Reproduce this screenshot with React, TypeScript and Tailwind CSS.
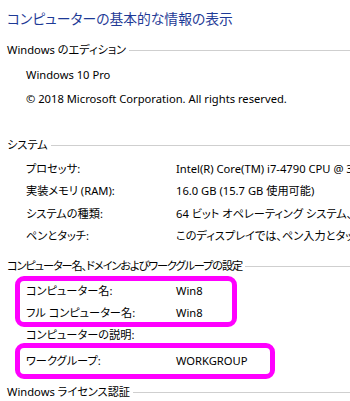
import React from "react";

const font = {
  fontFamily: '"Segoe UI", "Noto Sans", "Noto Sans CJK JP", sans-serif',
};

function Header({ children, h, tight }: { children: React.ReactNode; h: string; tight?: boolean }) {
  return (
    <div className={`flex items-center pl-[7px] ${h}`}>
      <span
        className={`whitespace-nowrap text-[11.2px] leading-none text-black ${tight ? "tracking-[-1.1px]" : ""}`}
      >
        {children}
      </span>
      <div className="ml-[3px] h-px flex-1 bg-[#cfcfcf]" />
    </div>
  );
}

function Row({ label, value, h, pl = "pl-[26px]" }: { label: string; value?: string; h: string; pl?: string }) {
  return (
    <div className={`flex items-center whitespace-nowrap text-[11.2px] leading-none text-black ${h} ${pl}`}>
      <span className="w-[150px] shrink-0">{label}</span>
      {value && <span>{value}</span>}
    </div>
  );
}

export default function App() {
  return (
    <div
      className="relative h-[401px] w-[350px] overflow-hidden bg-white [font-feature-settings:'palt']"
      style={font}
    >
      <div className="flex h-[38px] items-center pl-[7px]">
        <span className="whitespace-nowrap text-[13.8px] leading-none text-[#1e3a96]">
          コンピューターの基本的な情報の表示
        </span>
      </div>

      <Header h="h-[24px]">Windows のエディション</Header>
      <div className="h-[1px]" />
      <Row h="h-[24px]" label="Windows 10 Pro" />
      <div className="flex h-[24px] items-center whitespace-nowrap pl-[26px] text-[11.2px] leading-none text-black">
        © 2018 Microsoft Corporation. All rights reserved.
      </div>

      <div className="h-[22px]" />
      <Header h="h-[24px]">システム</Header>
      <div className="h-[1px]" />
      <Row h="h-[22px]" label="プロセッサ:" value="Intel(R) Core(TM) i7-4790 CPU @ 3.60GHz   3.60 GHz" />
      <Row h="h-[22px]" label="実装メモリ (RAM):" value="16.0 GB (15.7 GB 使用可能)" />
      <Row h="h-[23px]" label="システムの種類:" value="64 ビット オペレーティング システム、x64 ベース プロセッサ" />
      <Row h="h-[22px]" label="ペンとタッチ:" value="このディスプレイでは、ペン入力とタッチ入力は利用できません" />

      <div className="h-[9px]" />
      <Header h="h-[20px]" tight>
        コンピューター名、ドメインおよびワークグループの設定
      </Header>

      <div className="ml-[15px] h-[51px] w-[222px] rounded-[9px] border-[5px] border-[#ff00ff]">
        <Row h="h-[20px]" pl="pl-[6px]" label="コンピューター名:" value="Win8" />
        <Row h="h-[24px]" pl="pl-[6px]" label="フル コンピューター名:" value="Win8" />
      </div>
      <Row h="h-[16px]" label="コンピューターの説明:" />
      <div className="ml-[15px] h-[36px] w-[260px] rounded-[9px] border-[5px] border-[#ff00ff]">
        <Row h="h-[26px]" pl="pl-[6px]" label="ワークグループ:" value="WORKGROUP" />
      </div>

      <Header h="h-[26px]">Windows ライセンス認証</Header>
    </div>
  );
}
